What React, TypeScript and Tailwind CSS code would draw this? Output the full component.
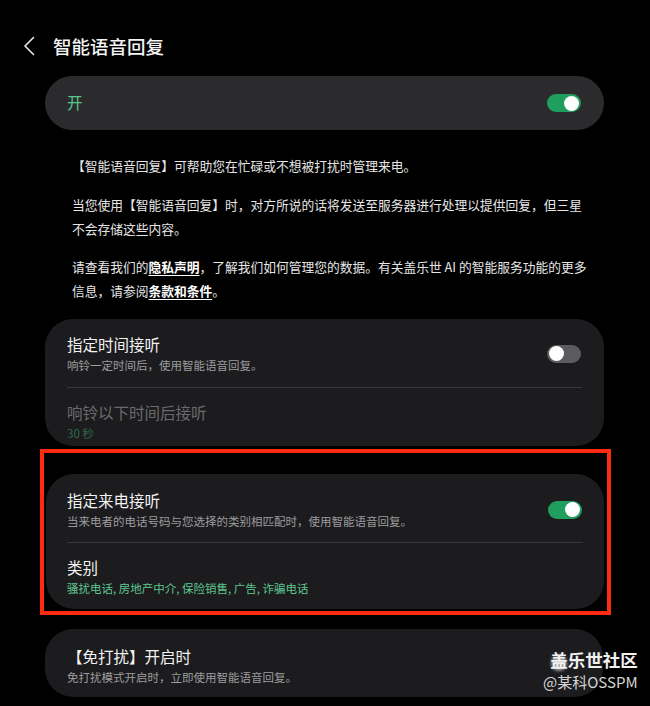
import React from 'react';

const font = { fontFamily: '"Noto Sans CJK SC", "Noto Sans", sans-serif' };

function Toggle({ on }: { on: boolean }) {
  return (
    <div
      className={`flex h-[18px] w-[34px] shrink-0 items-center rounded-full px-[2px] ${on ? 'justify-end bg-[#1f9e5e]' : 'justify-start bg-[#5c5c60]'}`}
    >
      <div className="h-[15px] w-[15px] rounded-full bg-white" />
    </div>
  );
}

function Row({
  title,
  sub,
  dim,
  subClass,
  toggle,
  className,
}: {
  title: string;
  sub: string;
  dim?: boolean;
  subClass?: string;
  toggle?: boolean;
  className?: string;
}) {
  return (
    <div className={`flex items-center justify-between ${className ?? ''}`}>
      <div className="flex flex-col">
        <span className={`text-[15.5px] leading-[20px] ${dim ? 'text-[#6a6a6c]' : 'text-[#f2f2f2]'}`}>{title}</span>
        <span className={`mt-[3px] text-[11.5px] leading-[16px] ${subClass ?? 'text-[#9c9c9e]'}`}>{sub}</span>
      </div>
      {toggle !== undefined && <Toggle on={toggle} />}
    </div>
  );
}

export default function App() {
  return (
    <div className="relative h-[706px] w-[650px] overflow-hidden bg-black" style={font}>
      {/* header */}
      <div className="mt-[36px] flex h-[20px] items-center">
        <svg width="12" height="20" viewBox="0 0 12 20" className="ml-[23px]" fill="none">
          <path d="M10.5 1.5 L2 10 L10.5 18.5" stroke="#e8e8e8" strokeWidth="1.6" strokeLinecap="round" strokeLinejoin="round" />
        </svg>
        <span className="ml-[18px] text-[18.5px] font-medium leading-[20px] text-[#f4f4f4]">智能语音回复</span>
      </div>

      {/* master switch */}
      <div className="ml-[45px] mt-[20px] flex h-[54px] w-[559px] items-center justify-between rounded-full bg-[#2b2b2d] pl-[22px] pr-[23px]">
        <span className="text-[15.5px] text-[#5cc690]">开</span>
        <Toggle on />
      </div>

      {/* description */}
      <div className="ml-[72px] mt-[24px] text-[12.75px] leading-[24px] text-[#e6e6e6]">
        <p className="whitespace-nowrap">【智能语音回复】可帮助您在忙碌或不想被打扰时管理来电。</p>
        <p className="mt-[15px] whitespace-nowrap">
          当您使用【智能语音回复】时，对方所说的话将发送至服务器进行处理以提供回复，但三星
          <br />
          不会存储这些内容。
        </p>
        <p className="mt-[14px] whitespace-nowrap">
          请查看我们的<span className="font-bold text-white underline underline-offset-[3px]">隐私声明</span>，了解我们如何管理您的数据。有关盖乐世 AI 的智能服务功能的更多
          <br />
          信息，请参阅<span className="font-bold text-white underline underline-offset-[3px]">条款和条件</span>。
        </p>
      </div>

      {/* timed answer card */}
      <div className="ml-[45px] mt-[16px] h-[127px] w-[559px] rounded-[28px] bg-[#1c1c1e] px-[22px] pt-[15px]">
        <Row title="指定时间接听" sub="响铃一定时间后，使用智能语音回复。" toggle={false} className="pr-[1px]" />
        <div className="mt-[14px] h-px bg-[#38383a]" />
        <Row title="响铃以下时间后接听" sub="30 秒" dim subClass="text-[#2f6a4a]" className="mt-[14px]" />
      </div>

      {/* highlighted card */}
      <div className="ml-[40px] mt-[3px] w-[571px] border-[4px] border-[#ff2a12] pb-[2px] pl-[2px] pr-[3px] pt-[21px]">
        <div className="h-[135px] rounded-[28px] bg-[#1c1c1e] px-[21px] pt-[16px]">
          <Row title="指定来电接听" sub="当来电者的电话号码与您选择的类别相匹配时，使用智能语音回复。" toggle className="pr-[1px]" />
          <div className="mt-[13px] h-px bg-[#38383a]" />
          <Row title="类别" sub="骚扰电话, 房地产中介, 保险销售, 广告, 诈骗电话" subClass="text-[#5cc690]" className="mt-[14px]" />
        </div>
      </div>

      {/* do not disturb card */}
      <div className="ml-[45px] mt-[14px] h-[68px] w-[558px] rounded-[28px] bg-[#1c1c1e] px-[22px] pt-[17px]">
        <Row title="【免打扰】开启时" sub="免打扰模式开启时，立即使用智能语音回复。" />
      </div>

      {/* watermark */}
      <div className="absolute left-[543px] top-[648px] flex flex-col items-end">
        <div className="relative">
          <div className="absolute left-[1px] top-[7px] h-[16px] w-[16px] rounded-full bg-[#bdbdbd]/80 blur-[1.5px]" />
          <span className="relative text-[17.5px] font-bold leading-[24px] text-[#f0f0f0]">盖乐世社区</span>
        </div>
        <span className="text-[15px] leading-[20px] text-[#d4d4d4]">@某科OSSPM</span>
      </div>
    </div>
  );
}
